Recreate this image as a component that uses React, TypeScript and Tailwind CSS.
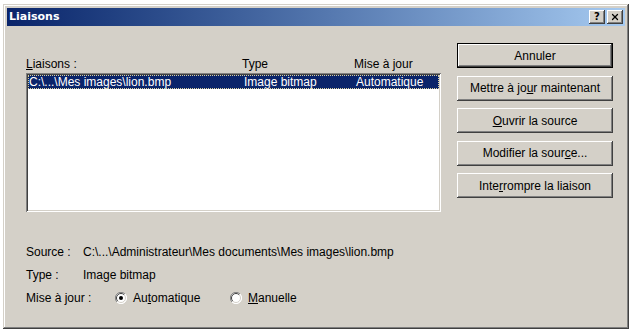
import { X } from 'lucide-react'

const raised =
  'shadow-[inset_-1px_-1px_#404040,inset_1px_1px_#ffffff,inset_-2px_-2px_#808080,inset_2px_2px_#d4d0c8]'

function Btn({ children, primary }: { children: React.ReactNode; primary?: boolean }) {
  if (primary) {
    return (
      <div className="h-[25px] border border-black bg-[#d4d0c8]">
        <div className={`h-full flex items-center justify-center ${raised}`}>{children}</div>
      </div>
    )
  }
  return (
    <div className={`h-[25px] flex items-center justify-center bg-[#d4d0c8] ${raised}`}>
      {children}
    </div>
  )
}

function Radio({ checked, children }: { checked?: boolean; children: React.ReactNode }) {
  return (
    <div className="flex items-center gap-[6px]">
      <svg width="12" height="12" viewBox="0 0 12 12">
        <circle cx="6" cy="6" r="5.5" fill="#ffffff" />
        <path d="M10 2 A5.5 5.5 0 0 0 2 10" stroke="#808080" strokeWidth="1" fill="none" />
        <path d="M9.2 2.8 A4.5 4.5 0 0 0 2.8 9.2" stroke="#404040" strokeWidth="1" fill="none" />
        <path d="M2 10 A5.5 5.5 0 0 0 10 2" stroke="#ffffff" strokeWidth="1" fill="none" />
        <path d="M2.8 9.2 A4.5 4.5 0 0 0 9.2 2.8" stroke="#d4d0c8" strokeWidth="1" fill="none" />
        {checked && <circle cx="6" cy="6" r="2" fill="#000000" />}
      </svg>
      <span>{children}</span>
    </div>
  )
}

export default function App() {
  return (
    <div className="w-[632px] h-[332px] bg-white pt-[4px] pl-[3px] font-['Liberation_Sans',Arial,sans-serif] text-[12px] text-black leading-[14px]">
      <div className="w-[626px] h-[325px] bg-[#d4d0c8] p-[4px] shadow-[inset_-1px_-1px_#404040,inset_1px_1px_#d4d0c8,inset_-2px_-2px_#808080,inset_2px_2px_#ffffff] flex flex-col">
        {/* title bar */}
        <div className="h-[18px] bg-gradient-to-r from-[#0a246a] to-[#a6caf0] flex items-center justify-between pl-[2px] pr-[2px]">
          <span className="font-['DejaVu_Sans',sans-serif] font-bold text-[11px] text-white">Liaisons</span>
          <div className="flex gap-[2px]">
            <div className={`w-[16px] h-[14px] bg-[#d4d0c8] flex items-center justify-center ${raised}`}>
              <span className="font-['DejaVu_Sans',sans-serif] font-bold text-[10px] leading-none mt-[-1px]">?</span>
            </div>
            <div className={`w-[16px] h-[14px] bg-[#d4d0c8] flex items-center justify-center ${raised}`}>
              <X size={10} strokeWidth={3} className="text-black mt-[-1px]" />
            </div>
          </div>
        </div>

        {/* body */}
        <div className="flex pl-[19px]">
          <div className="w-[415px] pt-[31px]">
            <div className="grid grid-cols-[216px_112px_1fr] h-[14px]">
              <span>
                <span className="underline">L</span>iaisons :
              </span>
              <span>Type</span>
              <span>Mise à jour</span>
            </div>
            <div className="mt-[2px] h-[139px] bg-white p-[2px] shadow-[inset_1px_1px_#808080,inset_-1px_-1px_#ffffff,inset_2px_2px_#404040,inset_-2px_-2px_#d4d0c8]">
              <div className="h-[14px] bg-[#0a246a] text-white grid grid-cols-[215px_112px_1fr] pl-[1px] outline outline-1 outline-dotted outline-[#d8d0a0] -outline-offset-1">
                <span>C:\...\Mes images\lion.bmp</span>
                <span>Image bitmap</span>
                <span>Automatique</span>
              </div>
            </div>

            <div className="mt-[33px] flex flex-col gap-[9px]">
              <div className="flex">
                <span className="w-[57px]">Source :</span>
                <span>C:\...\Administrateur\Mes documents\Mes images\lion.bmp</span>
              </div>
              <div className="flex">
                <span className="w-[57px]">Type :</span>
                <span>Image bitmap</span>
              </div>
              <div className="flex items-center">
                <span className="w-[89px]">Mise à jour :</span>
                <div className="w-[115px]">
                  <Radio checked>
                    Au<span className="underline">t</span>omatique
                  </Radio>
                </div>
                <Radio>
                  <span className="underline">M</span>anuelle
                </Radio>
              </div>
            </div>
          </div>

          <div className="ml-[16px] w-[156px] pt-[17px] flex flex-col gap-[7.5px]">
            <Btn primary>Annuler</Btn>
            <Btn>
              Mettre à jo<span className="underline">u</span>r maintenant
            </Btn>
            <Btn>
              <span className="underline">O</span>uvrir la source
            </Btn>
            <Btn>
              Modifier la sour<span className="underline">c</span>e...
            </Btn>
            <Btn>
              Inte<span className="underline">r</span>rompre la liaison
            </Btn>
          </div>
        </div>
      </div>
    </div>
  )
}
